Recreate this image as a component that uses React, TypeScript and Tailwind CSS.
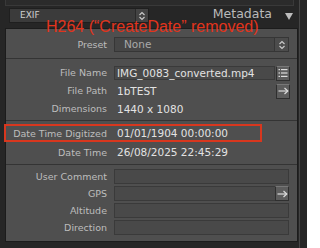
import React from 'react';

const Stepper = () => (
  <svg width="8" height="10" viewBox="0 0 8 10" fill="none" stroke="#c9c9c9" strokeWidth="1.2">
    <path d="M1.5 4 L4 1.5 L6.5 4" />
    <path d="M1.5 6 L4 8.5 L6.5 6" />
  </svg>
);

const ListIcon = () => (
  <svg width="10" height="10" viewBox="0 0 10 10" fill="#dcdcdc">
    <rect x="0.5" y="1" width="1.5" height="1.2" />
    <rect x="3" y="1" width="6.5" height="1.2" />
    <rect x="0.5" y="4.4" width="1.5" height="1.2" />
    <rect x="3" y="4.4" width="6.5" height="1.2" />
    <rect x="0.5" y="7.8" width="1.5" height="1.2" />
    <rect x="3" y="7.8" width="6.5" height="1.2" />
  </svg>
);

const ArrowIcon = () => (
  <svg width="11" height="8" viewBox="0 0 11 8" fill="none" stroke="#dcdcdc" strokeWidth="1.2">
    <path d="M0.5 4 H9.5" />
    <path d="M6.5 1 L9.8 4 L6.5 7" />
  </svg>
);

const SideButton = ({ children }: { children: React.ReactNode }) => (
  <div className="w-[14px] h-[15px] flex items-center justify-center bg-[#5d5d5d] border border-[#2f2f2f] border-t-[#777]">
    {children}
  </div>
);

const Label = ({ children }: { children: React.ReactNode }) => (
  <div className="w-[101px] shrink-0 text-right text-[9.5px] text-[#bdbdbd] leading-none">{children}</div>
);

const TextRow = ({ label, value, h = 'h-[18px]' }: { label: string; value: string; h?: string }) => (
  <div className={`flex items-center ${h}`}>
    <Label>{label}</Label>
    <div className="ml-[7px] pl-[3px] text-[10.5px] text-[#e2e2e2] leading-none">{value}</div>
  </div>
);

const BoxRow = ({ label, button }: { label: string; button?: React.ReactNode }) => (
  <div className="flex items-center h-[15px]">
    <Label>{label}</Label>
    <div className="ml-[7px] w-[175px] h-[15px] flex bg-[#494949] border border-[#3a3a3a]">
      <div className="flex-1" />
      {button}
    </div>
  </div>
);

const Separator = () => <div className="h-px bg-[#343434]" />;

export default function App() {
  return (
    <div
      className="relative w-[307px] h-[248px] overflow-hidden bg-[#262626]"
      style={{ fontFamily: '"DejaVu Sans", "Liberation Sans", sans-serif' }}
    >
      <div className="w-[300px] h-full border-r border-[#464646] flex flex-col">
        <div className="mx-[5px] h-[6px] border-x border-b border-[#393939] bg-[#2b2b2b]" />

        <div className="h-[22px] flex items-start pt-[2px] pl-[9px] pr-[6px]">
          <div className="w-[140px] h-[15px] flex bg-[#3b3b3b] border border-[#1f1f1f]">
            <div className="flex-1 pl-[10px] flex items-center text-[9px] text-[#cfcfcf] leading-none">EXIF</div>
            <div className="w-[13px] flex items-center justify-center bg-[#444] border-l border-[#2a2a2a]">
              <Stepper />
            </div>
          </div>
          <div className="flex-1" />
          <div className="text-[12.5px] text-[#bababa] leading-none">Metadata</div>
          <div className="ml-[13px] mt-[5px] w-0 h-0 border-x-[4px] border-x-transparent border-t-[7px] border-t-[#bdbdbd]" />
        </div>

        <div className="ml-[5px] w-[293px] border border-[#1c1c1c] bg-[#4f4f4f] flex flex-col">
          <div className="pt-[8px] pb-[6px]">
            <div className="flex items-center h-[15px]">
              <Label>Preset</Label>
              <div className="ml-[7px] w-[175px] h-[15px] flex bg-[#464646] border border-[#363636]">
                <div className="flex-1 pl-[9px] flex items-center text-[10.5px] text-[#a9a9a9] leading-none">None</div>
                <div className="w-[14px] flex items-center justify-center bg-[#4c4c4c] border-l border-[#363636]">
                  <Stepper />
                </div>
              </div>
            </div>
          </div>
          <Separator />

          <div className="pt-[5px] pb-[2px]">
            <div className="flex items-center h-[18px]">
              <Label>File Name</Label>
              <div className="ml-[7px] w-[161px] h-[14px] flex items-center pl-[2px] bg-[#494949] border border-[#3a3a3a] text-[10.5px] text-[#e2e2e2] leading-none">
                IMG_0083_converted.mp4
              </div>
              <div className="ml-[1px]">
                <SideButton>
                  <ListIcon />
                </SideButton>
              </div>
            </div>
            <div className="flex items-center h-[18px]">
              <Label>File Path</Label>
              <div className="ml-[7px] w-[162px] pl-[3px] text-[10.5px] text-[#e2e2e2] leading-none">1bTEST</div>
              <SideButton>
                <ArrowIcon />
              </SideButton>
            </div>
            <TextRow label="Dimensions" value="1440 x 1080" />
          </div>
          <Separator />

          <div className="pt-[3px] pb-[2px]">
            <div className="relative">
              <TextRow label="Date Time Digitized" value="01/01/1904 00:00:00" h="h-[19px]" />
              <div className="absolute left-[-2px] top-0 w-[258px] h-[18px] border-2 border-[#d8371e]" />
            </div>
            <TextRow label="Date Time" value="26/08/2025 22:45:29" h="h-[19px]" />
          </div>
          <Separator />

          <div className="pt-[4px] pb-[6px] flex flex-col gap-[2px]">
            <BoxRow label="User Comment" />
            <BoxRow
              label="GPS"
              button={
                <div className="-mt-px -mr-px">
                  <SideButton>
                    <ArrowIcon />
                  </SideButton>
                </div>
              }
            />
            <BoxRow label="Altitude" />
            <BoxRow label="Direction" />
          </div>
        </div>
      </div>

      <div
        className="absolute left-[46px] top-[19px] text-[16px] leading-none text-[#e2341c] whitespace-nowrap"
        style={{ fontFamily: '"Liberation Sans", Arial, sans-serif' }}
      >
        H264 (“CreateDate” removed)
      </div>
    </div>
  );
}
